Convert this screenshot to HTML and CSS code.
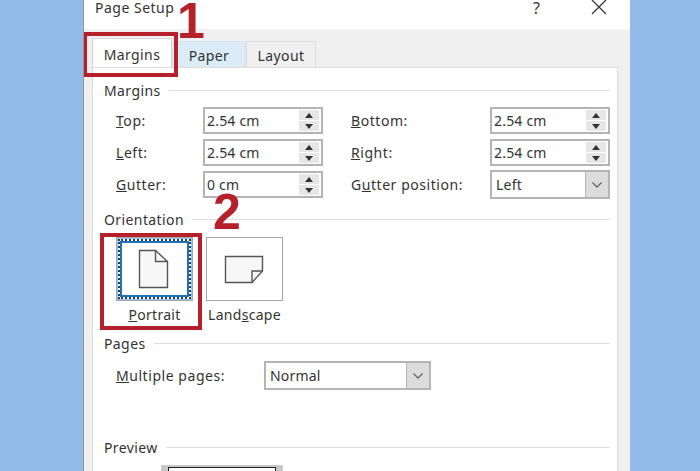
FILE: index.html
```html
<!DOCTYPE html>
<html lang="en">
<head>
<meta charset="utf-8">
<title>Page Setup</title>
<link rel="stylesheet" href="styles.css">
</head>
<body>
<div class="dialog">
  <header class="titlebar">
    <span class="title">Page Setup</span>
    <span class="help">?</span>
    <svg class="close" width="16" height="16" viewBox="0 0 16 16"><path d="M1 1 L15 15 M15 1 L1 15" stroke="#333" stroke-width="1.3" fill="none"/></svg>
  </header>
  <div class="body">
    <div class="tabs">
      <div class="tab active">Margins</div>
      <div class="tab hover">Paper</div>
      <div class="tab">Layout</div>
    </div>
    <div class="panel">
      <div class="section"><span>Margins</span><i></i></div>
      <div class="margins">
        <label class="lbl"><u>T</u>op:</label>
        <div class="spin"><span>2.54 cm</span><div class="arrows"><b class="up"></b><b class="down"></b></div></div>
        <label class="lbl second"><u>B</u>ottom:</label>
        <div class="spin"><span>2.54 cm</span><div class="arrows"><b class="up"></b><b class="down"></b></div></div>
        <label class="lbl"><u>L</u>eft:</label>
        <div class="spin"><span>2.54 cm</span><div class="arrows"><b class="up"></b><b class="down"></b></div></div>
        <label class="lbl second"><u>R</u>ight:</label>
        <div class="spin"><span>2.54 cm</span><div class="arrows"><b class="up"></b><b class="down"></b></div></div>
        <label class="lbl"><u>G</u>utter:</label>
        <div class="spin"><span>0 cm</span><div class="arrows"><b class="up"></b><b class="down"></b></div></div>
        <label class="lbl second">G<u>u</u>tter position:</label>
        <div class="combo"><span>Left</span><div class="drop"><svg width="12" height="8" viewBox="0 0 12 8"><path d="M1.5 1.5 L6 6 L10.5 1.5" stroke="#666" stroke-width="1.3" fill="none"/></svg></div></div>
      </div>
      <div class="section orient-head"><span>Orientation</span><i></i></div>
      <div class="orient">
        <div class="opt">
          <div class="obtn selected">
            <div class="focus">
              <svg class="icon-portrait" width="34" height="40" viewBox="0 0 34 40"><path d="M3.5 1.5 H19.5 L31.5 12.5 V38.5 H3.5 Z" fill="#f7f7f7" stroke="#555" stroke-width="1.4"/><path d="M19.5 1.5 V12.5 H31.5" fill="none" stroke="#555" stroke-width="1.4"/></svg>
            </div>
          </div>
          <div class="olabel"><u>P</u>ortrait</div>
        </div>
        <div class="opt">
          <div class="obtn">
            <svg class="icon-landscape" width="40" height="30" viewBox="0 0 40 30"><path d="M1.5 2.5 H38.5 V17 L28 28.5 H1.5 Z" fill="#f7f7f7" stroke="#555" stroke-width="1.4"/><path d="M38.5 17 H28 V28.5" fill="none" stroke="#555" stroke-width="1.4"/></svg>
          </div>
          <div class="olabel">Land<u>s</u>cape</div>
        </div>
      </div>
      <div class="section pages-head"><span>Pages</span><i></i></div>
      <div class="pages">
        <label class="lbl"><u>M</u>ultiple pages:</label>
        <div class="combo wide"><span>Normal</span><div class="drop"><svg width="12" height="8" viewBox="0 0 12 8"><path d="M1.5 1.5 L6 6 L10.5 1.5" stroke="#666" stroke-width="1.3" fill="none"/></svg></div></div>
      </div>
      <div class="section preview-head"><span>Preview</span><i></i></div>
      <div class="preview"><div class="sheet"></div></div>
    </div>
  </div>
  <div class="mark box-tab"></div>
  <div class="mark box-portrait"></div>
  <div class="num num1">1</div>
  <div class="num num2">2</div>
</div>
</body>
</html>
```
FILE: styles.css
```css
* { box-sizing: border-box; }
html, body { margin: 0; height: 100%; overflow: hidden; }
body {
  background: #93bbe9;
  font-family: "Noto Sans", "Open Sans", sans-serif;
  font-size: 14px;
  color: #333;
}
.dialog {
  position: relative;
  width: 547px;
  height: 471px;
  margin-left: 83px;
  background: #fff;
  border-left: 1px solid #8f9aa6;
  overflow: hidden;
}
.titlebar {
  height: 29px;
  display: flex;
  align-items: center;
  background: #fff;
  padding-bottom: 13px;
  padding-left: 11px;
  padding-right: 23px;
}
.title { line-height: 16px; flex: 1; letter-spacing: .5px; }
.help { font-size: 16px; line-height: 16px; margin-right: 51px; }
.close { margin-top: -2px; }
.body {
  background: #f0f0f0;
  height: 442px;
  padding: 9px 12px 0 8px;
  display: flex;
  flex-direction: column;
}
.tabs { display: flex; align-items: flex-end; height: 29px; }
.tab {
  height: 26px;
  padding-top: 4px;
  text-align: center;
  background: #f0f0f0;
  border: 1px solid #dcdcdc;
  border-bottom: 0;
  width: 70px;
  letter-spacing: .4px;
  line-height: 20px;
}
.tab.active {
  height: 29px;
  width: 80px;
  background: #fff;
  border-color: #d4d4d4;
  padding-top: 6px;
}
.tab.hover { background: #dcebf8; width: 74px; border-color: #d8e4ef; }
.panel {
  flex: 1;
  background: #fff;
  border: 1px solid #dcdcdc;
  border-bottom: 0;
  padding: 12px 7px 0 11px;
}
.section { display: flex; align-items: center; gap: 8px; height: 20px; letter-spacing: .4px; }
.section i { flex: 1; height: 1px; background: #dedede; }
.margins {
  display: grid;
  grid-template-columns: 87px 120px 28px 139px 120px;
  grid-auto-rows: 27px;
  row-gap: 5px;
  margin-top: 7px;
  padding-left: 12px;
  align-items: center;
}
.lbl { letter-spacing: .55px; }
.lbl.second { grid-column: 4; }
.spin, .combo {
  display: flex;
  height: 27px;
  align-items: center;
  background: #fff;
  border: 2px solid #b4b4b4;
  padding-left: 2px;
  justify-content: space-between;
  letter-spacing: .2px;
}
.combo { height: 29px; padding-left: 4px; }
.arrows {
  width: 20px;
  height: 100%;
  padding: 1px 0;
  display: flex;
  flex-direction: column;
  gap: 1px;
  margin-right: 2px;
}
.arrows b {
  flex: 1;
  background: #e6e6e6;
  display: flex;
  align-items: center;
  justify-content: center;
}
.arrows b::before {
  content: "";
  border-left: 4px solid transparent;
  border-right: 4px solid transparent;
}
.up::before { border-bottom: 5px solid #333; }
.down::before { border-top: 5px solid #333; }
.drop {
  width: 23px;
  height: 100%;
  background: #dcdcdc;
  border-left: 1px solid #b4b4b4;
  display: flex;
  align-items: center;
  justify-content: center;
}
.orient-head { margin-top: 11px; }
.orient { display: flex; margin-top: 8px; padding-left: 12px; gap: 13px; }
.opt { width: 77px; }
.obtn {
  height: 64px;
  border: 1px solid #a6a6a6;
  display: flex;
  align-items: center;
  justify-content: center;
  background: #fff;
}
.obtn.selected { padding: 1px; }
.focus {
  width: 100%;
  height: 100%;
  border: 2px dotted #173f73;
  box-shadow: inset 0 0 0 2px #1f72b8, 0 0 0 1px #9cc3e0;
  display: flex;
  align-items: center;
  justify-content: center;
}
.icon-portrait { margin-right: 3px; }
.icon-landscape { margin-right: 2px; }
.olabel { text-align: center; line-height: 20px; margin-top: 4px; letter-spacing: .3px; }
.pages-head { margin-top: 8px; }
.pages { display: flex; align-items: center; padding-left: 12px; margin-top: 8px; }
.pages .lbl { width: 148px; }
.combo.wide { width: 167px; }
.preview-head { margin-top: 47px; }
.preview { padding-left: 57px; margin-top: 8px; }
.sheet { width: 122px; height: 40px; background: #c8c8c8; padding: 2px 7px 0; }
.sheet::before { content: ""; display: block; height: 40px; background: #fff; border: 1px solid #222; }
.mark { position: absolute; border: 4px solid #b5202a; pointer-events: none; }
.box-tab { left: -1px; top: 32px; width: 95px; height: 45px; }
.box-portrait { left: 16px; top: 233px; width: 102px; height: 97px; }
.num {
  position: absolute;
  font-family: "Liberation Sans", sans-serif;
  font-weight: 700;
  font-size: 50px;
  line-height: 36px;
  color: #b5202a;
}
.num1 { left: 93px; top: 3px; }
.num2 { left: 129px; top: 194px; }
```
